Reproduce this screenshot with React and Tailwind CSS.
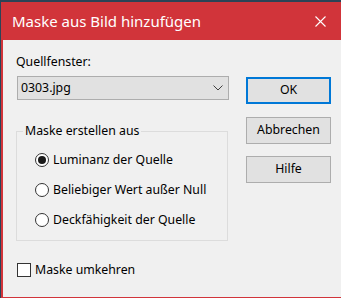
export default function App() {
  const font = { fontFamily: '"Noto Sans", "Open Sans", sans-serif' };
  return (
    <div className="w-[341px] h-[298px] bg-[#2b4356] pt-[2px] pl-[1px] overflow-hidden" style={font}>
      <div className="flex flex-col h-full bg-[#d1343a] pl-[2px] pb-[1px]">
        <div className="h-[38px] flex items-center shrink-0 -ml-[2px]">
          <span className="pl-[11px] text-white text-[15px] leading-none">Maske aus Bild hinzufügen</span>
          <svg className="ml-auto mr-[15px]" width="11" height="11" viewBox="0 0 11 11">
            <path d="M0.5 0.5 L10.5 10.5 M10.5 0.5 L0.5 10.5" stroke="white" strokeWidth="1.1" />
          </svg>
        </div>
        <div className="flex-1 bg-[#f0f0f0] flex text-[12.3px] text-black">
          <div className="ml-[13px] w-[213px] flex flex-col">
            <div className="mt-[14px] leading-[16px]">Quellfenster:</div>
            <div className="mt-[6px] ml-[1px] w-[212px] h-[24px] bg-[#e1e1e1] border border-[#adadad] flex items-center pl-[3px] pr-[5px]">
              <span>0303.jpg</span>
              <svg className="ml-auto" width="10" height="6" viewBox="0 0 10 6">
                <path d="M0.5 0.5 L5 5 L9.5 0.5" stroke="#404040" strokeWidth="1" fill="none" />
              </svg>
            </div>
            <div className="relative mt-[31px] w-[212px] h-[110px] border border-[#dcdcdc] flex flex-col pl-[18px] pt-[20px] gap-[14px]">
              <span className="absolute -top-[9px] left-[6px] px-[2px] bg-[#f0f0f0] leading-[16px]">Maske erstellen aus</span>
              <div className="flex items-center h-[16px]">
                <div className="w-[14px] h-[14px] rounded-full border border-[#333] bg-white flex items-center justify-center">
                  <div className="w-[8px] h-[8px] rounded-full bg-[#1a1a1a]" />
                </div>
                <span className="ml-[4px]">Luminanz der Quelle</span>
              </div>
              <div className="flex items-center h-[16px]">
                <div className="w-[14px] h-[14px] rounded-full border border-[#333] bg-white" />
                <span className="ml-[4px]">Beliebiger Wert außer Null</span>
              </div>
              <div className="flex items-center h-[16px]">
                <div className="w-[14px] h-[14px] rounded-full border border-[#333] bg-white" />
                <span className="ml-[4px]">Deckfähigkeit der Quelle</span>
              </div>
            </div>
            <div className="mt-[21px] ml-[1px] flex items-center h-[16px]">
              <div className="w-[14px] h-[14px] border border-[#333] bg-white" />
              <span className="ml-[4px]">Maske umkehren</span>
            </div>
          </div>
          <div className="ml-[17px] mt-[37px] w-[85px] flex flex-col">
            <div className="h-[27px] bg-[#e1e1e1] border-2 border-[#0078d7] flex items-center justify-center">OK</div>
            <div className="mt-[13px] h-[27px] bg-[#e1e1e1] border border-[#adadad] flex items-center justify-center">Abbrechen</div>
            <div className="mt-[12px] h-[27px] bg-[#e1e1e1] border border-[#adadad] flex items-center justify-center">Hilfe</div>
          </div>
        </div>
      </div>
    </div>
  );
}
